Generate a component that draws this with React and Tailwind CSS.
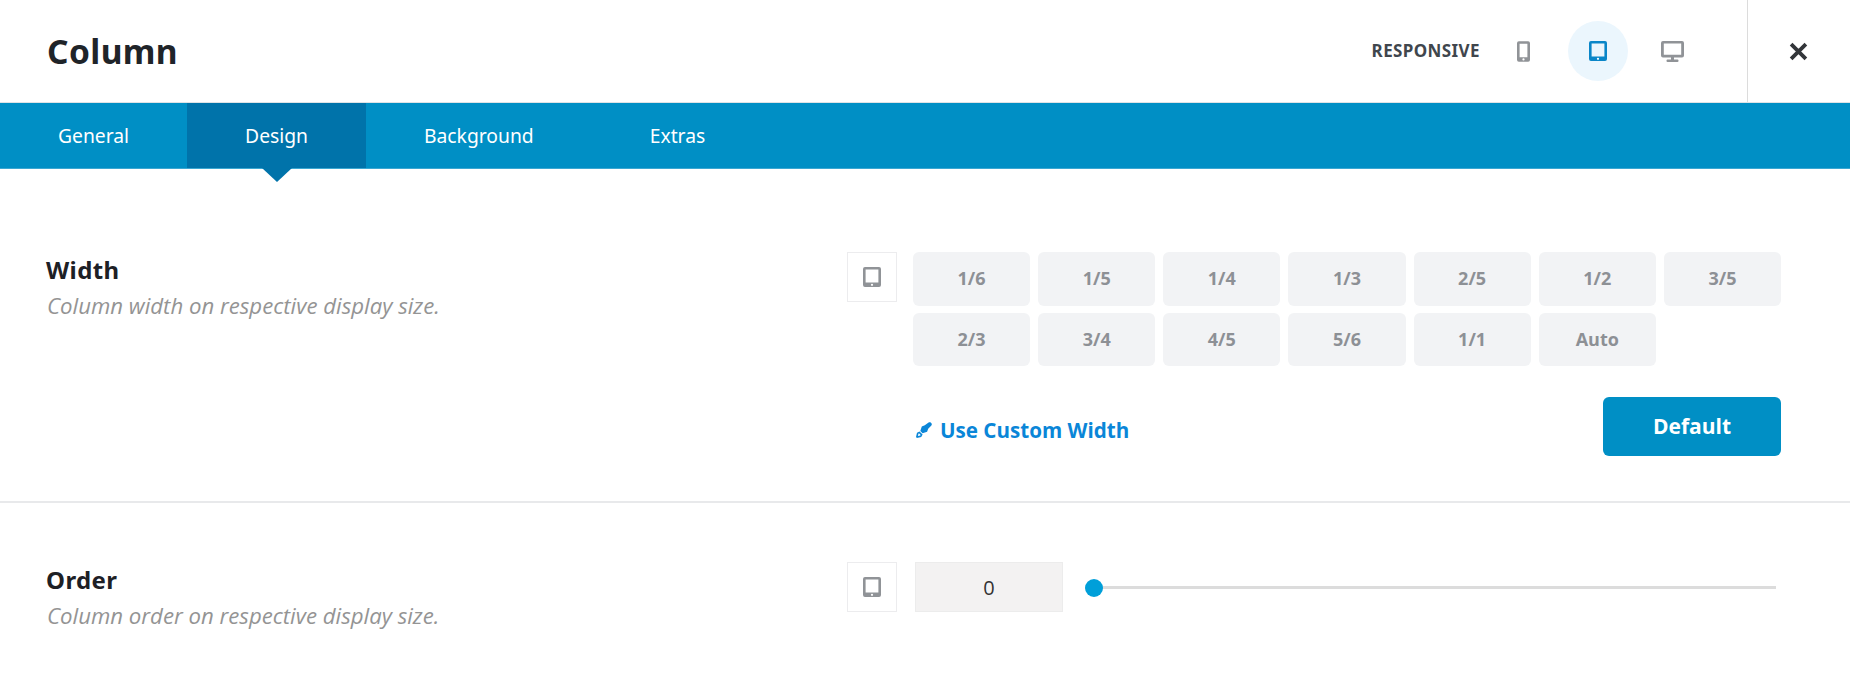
import React from 'react';

const sans = "font-['Open_Sans',sans-serif]";
const noto = "font-['Noto_Sans',sans-serif]";

const tabs = ['General', 'Design', 'Background', 'Extras'];

const widths = ['1/6', '1/5', '1/4', '1/3', '2/5', '1/2', '3/5', '2/3', '3/4', '4/5', '5/6', '1/1', 'Auto'];

const PhoneIcon = ({ className }) => (
  <svg viewBox="0 0 14 22" className={className} fill="currentColor">
    <path fillRule="evenodd" d="M2 0h10a2 2 0 0 1 2 2v18a2 2 0 0 1-2 2H2a2 2 0 0 1-2-2V2a2 2 0 0 1 2-2zm.8 2.600v14.600h8.400v-14.600z" />
    <circle cx="7" cy="19.600" r="1.200" fill="#fff" />
  </svg>
);

const TabletIcon = ({ className, dot = '#fff' }) => (
  <svg viewBox="0 0 18 20" className={className} fill="currentColor">
    <path fillRule="evenodd" d="M2 0h14a2 2 0 0 1 2 2v16a2 2 0 0 1-2 2H2a2 2 0 0 1-2-2V2a2 2 0 0 1 2-2zm.6 2.600v13h12.800v-13z" />
    <circle cx="9" cy="17.800" r="1.100" fill={dot} />
  </svg>
);

const DesktopIcon = ({ className }) => (
  <svg viewBox="0 0 23 21" className={className} fill="currentColor">
    <path fillRule="evenodd" d="M2 0h19a2 2 0 0 1 2 2v12.500a2 2 0 0 1-2 2H2a2 2 0 0 1-2-2V2a2 2 0 0 1 2-2zm.8 2.600v11.200h17.400v-11.200z" />
    <path d="M10 16h3v3h-3z" />
    <rect x="5.500" y="18.600" width="12" height="2.400" rx="1" />
  </svg>
);

const PenIcon = ({ className }) => (
  <svg viewBox="0 0 16 16" className={className} fill="currentColor">
    <path d="M12.600.6c.6-.6 1.500-.6 2.100 0l.7.7c.6.600.6 1.500 0 2.100l-3.200 3.300-1.100 3-4.500 1.500-2.300-2.300 1.500-4.500 3-1.100z" />
    <path fillRule="evenodd" d="M3.500 9.400 6.600 12.500 5.200 15l-4.300 1L0 15.100l1-4.300zM2.500 11.600 1.900 14.100 4.400 13.500 4.500 12.800 3.200 11.500z" />
  </svg>
);

const DeviceBox = () => (
  <div className="flex h-[50px] w-[50px] shrink-0 items-center justify-center border border-[#ececee] bg-white">
    <TabletIcon className="mb-[1px] h-[20px] w-[18px] text-[#909397]" />
  </div>
);

const Label = ({ title, desc }) => (
  <div className="w-[847px] shrink-0 pl-[47px] pt-[3px]">
    <h3 className={`${noto} ml-[-1px] text-[24px] font-bold leading-[30px] text-[#1d2025] tracking-[0.4px]`}>{title}</h3>
    <p className={`${sans} mt-[6px] text-[22.200px] italic leading-[30px] text-[#949494]`}>{desc}</p>
  </div>
);

export default function App() {
  return (
    <div className={`${sans} h-[689px] w-[1850px] overflow-hidden bg-white`}>
      {/* header */}
      <div className="flex h-[103px] items-center justify-between border-b border-[#dfe3e6]">
        <h1 className={`${noto} pl-[47px] text-[33.500px] font-bold tracking-[0.4px] text-[#1f2429]`}>Column</h1>
        <div className="flex h-full items-center">
          <span className={`${noto} text-[17px] font-bold tracking-[0.4px] text-[#40464d]`}>RESPONSIVE</span>
          <div className="ml-[13px] flex w-[60px] justify-center">
            <PhoneIcon className="h-[21px] w-[13px] text-[#909397]" />
          </div>
          <div className="ml-[15px] flex h-[60px] w-[60px] items-center justify-center rounded-full bg-[#ebf6fd]">
            <TabletIcon className="h-[20px] w-[18px] text-[#0a86c8]" />
          </div>
          <div className="ml-[14px] flex w-[60px] justify-center">
            <DesktopIcon className="h-[21px] w-[23px] text-[#909397]" />
          </div>
          <div className="ml-[45px] flex h-full w-[103px] items-center justify-center border-l border-[#dcdcdc] pr-[1px]">
            <svg viewBox="0 0 18 18" className="h-[19px] w-[19px] text-[#33363a]" fill="none" stroke="currentColor" strokeWidth="3.600">
              <path d="M2 2l14 14M16 2 2 16" />
            </svg>
          </div>
        </div>
      </div>

      {/* tabs */}
      <div className={`${noto} flex h-[66px] border-b border-[#3ba7d2] bg-[#008fc5] text-[19.300px] text-white`}>
        {tabs.map((t) => (
          <div key={t} className={`relative flex items-center justify-center px-[58px] pt-[1px] ${t === 'Design' ? 'bg-[#0073aa]' : ''}`}>
            {t}
            {t === 'Design' && (
              <span className="absolute left-1/2 top-full ml-[-15px] h-0 w-0 border-x-[15px] border-t-[14px] border-x-transparent border-t-[#0073aa]" />
            )}
          </div>
        ))}
      </div>

      {/* width row */}
      <div className="flex h-[334px] border-b-2 border-[#e8e9eb] pt-[83px]">
        <Label title="Width" desc="Column width on respective display size." />
        <div className="flex">
          <DeviceBox />
          <div className="ml-[16px] w-[868px]">
            <div className="grid grid-cols-7 gap-x-[8px] gap-y-[7px]">
              {widths.map((w) => (
                <div key={w} className="flex h-[53.500px] items-center justify-center rounded-[6px] bg-[#f2f3f5] text-[18px] font-bold text-[#8d9095]">
                  {w}
                </div>
              ))}
            </div>
            <div className="mt-[31px] flex items-center justify-between">
              <a className="ml-[3px] mt-[8px] flex items-center gap-[8px] text-[20.600px] font-bold text-[#0a86d8]">
                <PenIcon className="h-[16px] w-[16px]" />
                Use Custom Width
              </a>
              <button className="flex h-[59px] w-[178px] items-center justify-center rounded-[6px] bg-[#008fc5] text-[21px] font-bold text-white">
                Default
              </button>
            </div>
          </div>
        </div>
      </div>

      {/* order row */}
      <div className="flex pt-[59px]">
        <Label title="Order" desc="Column order on respective display size." />
        <div className="flex items-start">
          <DeviceBox />
          <div className="ml-[18px] flex h-[50px] w-[148px] items-center justify-center border border-[#ececec] bg-[#f3f2f2] pt-[2px] text-[20px] text-[#333]">
            0
          </div>
          <div className="relative ml-[22px] mt-[17px] h-[18px] w-[691px]">
            <div className="absolute left-[9px] right-0 top-[7px] h-[3px] bg-[#dcdcdc]" />
            <div className="absolute left-0 top-0 h-[18px] w-[18px] rounded-full bg-[#009fd9]" />
          </div>
        </div>
      </div>
    </div>
  );
}
